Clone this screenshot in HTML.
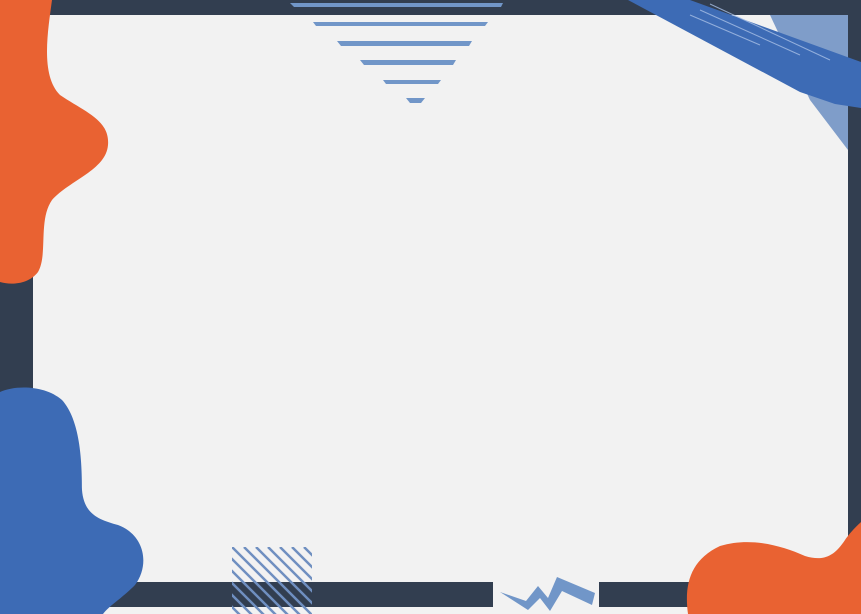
<!DOCTYPE html>
<html><head><meta charset="utf-8"><style>html,body{margin:0;padding:0;background:#f2f2f2;}svg{display:block}</style></head>
<body>
<svg width="861" height="614" viewBox="0 0 861 614" xmlns="http://www.w3.org/2000/svg">
<rect width="861" height="614" fill="#f2f2f2"/>
<rect x="0" y="0" width="861" height="15" fill="#323e50"/>
<rect x="0" y="0" width="33" height="600" fill="#323e50"/>
<rect x="848" y="0" width="13" height="560" fill="#323e50"/>
<rect x="90" y="582" width="403" height="25" fill="#323e50"/>
<rect x="599" y="582" width="120" height="25" fill="#323e50"/>
<g fill="#7196c8">
<polygon points="290,3 503,3 501,7 294,7"/>
<polygon points="313,22 488,22 485,26 316,26"/>
<polygon points="337,41 472,41 469,46 341,46"/>
<polygon points="360,60 456,60 453,65 364,65"/>
<polygon points="383,80 441,80 438,84 386,84"/>
<polygon points="406,98 425,98 421,103 410,103"/>
</g>
<polygon points="770,15 848,15 848,150 810,100" fill="#7f9dc9"/>
<polygon points="628,0 690,0 861,62 861,108 835,104 800,92" fill="#3d6bb5"/>
<g stroke="#a9c0e6" stroke-width="1" opacity="0.8">
<line x1="700" y1="10" x2="800" y2="55"/>
<line x1="710" y1="4" x2="830" y2="60"/>
<line x1="690" y1="15" x2="760" y2="45"/>
</g>
<defs><clipPath id="hc"><rect x="232" y="547" width="80" height="67"/></clipPath></defs>
<g clip-path="url(#hc)" stroke="#6f8fc0" stroke-width="2.5">
<line x1="160" y1="547" x2="240" y2="627"/><line x1="172" y1="547" x2="252" y2="627"/>
<line x1="184" y1="547" x2="264" y2="627"/><line x1="196" y1="547" x2="276" y2="627"/>
<line x1="208" y1="547" x2="288" y2="627"/><line x1="220" y1="547" x2="300" y2="627"/>
<line x1="232" y1="547" x2="312" y2="627"/><line x1="244" y1="547" x2="324" y2="627"/>
<line x1="256" y1="547" x2="336" y2="627"/><line x1="268" y1="547" x2="348" y2="627"/>
<line x1="280" y1="547" x2="360" y2="627"/><line x1="292" y1="547" x2="372" y2="627"/>
<line x1="304" y1="547" x2="384" y2="627"/>
</g>
<polygon points="500,592 526,601 538,586 548,598 557,577 595,593 592,605 562,591 550,611 540,598 528,610" fill="#7196c8"/>
<path d="M0,0 L52,0 C48,30 40,75 60,95 C85,112 110,120 108,145 C106,170 70,180 52,200 C38,220 48,255 38,272 C28,285 10,285 0,282 Z" fill="#e96232"/>
<path d="M0,392 C15,385 45,385 62,400 C80,420 82,460 82,490 C84,515 100,520 118,525 C145,535 150,565 135,585 C120,600 110,605 103,614 L0,614 Z" fill="#3d6bb5"/>
<path d="M688,614 C684,585 690,560 720,546 C750,537 780,545 805,556 C825,562 835,555 845,540 C852,530 858,525 861,522 L861,614 Z" fill="#e96232"/>
</svg>
</body></html>
